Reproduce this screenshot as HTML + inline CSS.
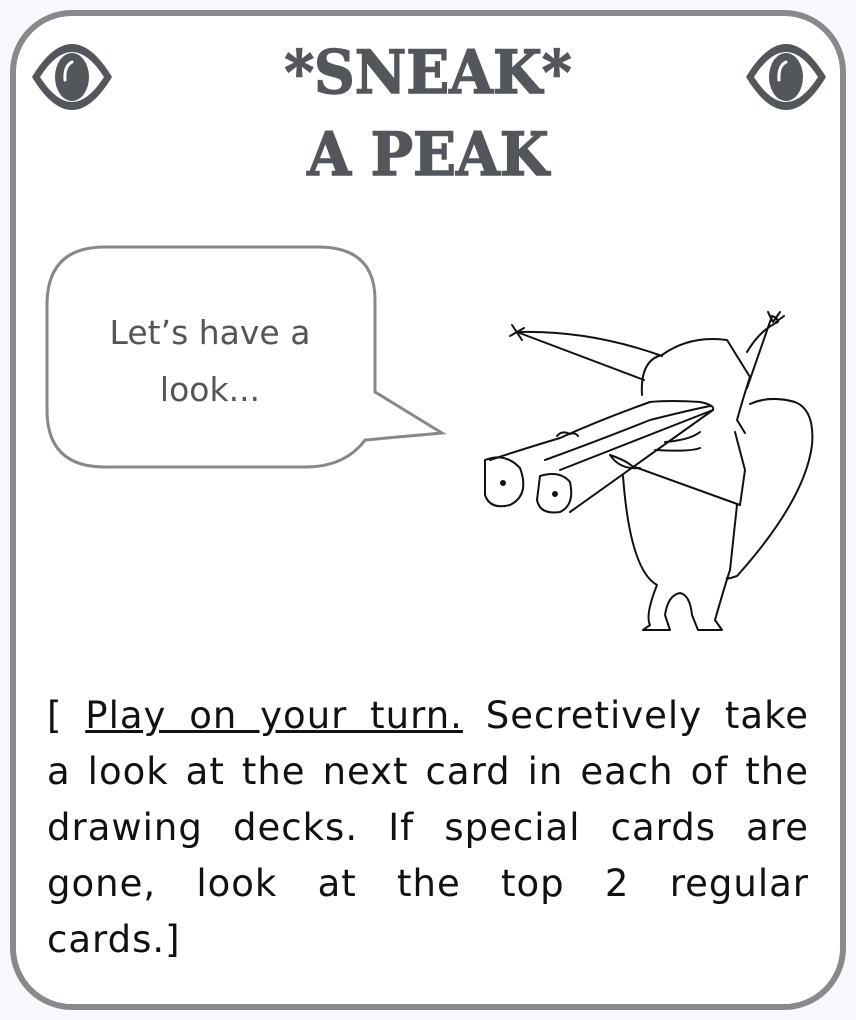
<!DOCTYPE html>
<html><head><meta charset="utf-8"><style>
html,body{margin:0;padding:0;background:#f8f8fc;}
body{width:856px;height:1020px;position:relative;overflow:hidden;font-family:"DejaVu Sans",sans-serif;}
.card{position:absolute;left:10px;top:10px;width:824px;height:988px;border:6px solid #87898c;border-radius:62px;background:#fff;}
.title{position:absolute;left:0;width:856px;text-align:center;font-family:"DejaVu Serif",serif;font-weight:bold;color:#53575c;font-size:60px;line-height:70px;transform:scaleX(0.94);transform-origin:428px 0;-webkit-text-stroke:1.5px #53575c;}
.body{position:absolute;left:47px;top:688px;width:762px;font-size:37px;letter-spacing:1px;line-height:56px;color:#111;}
.body div{text-align:justify;text-align-last:justify;}
.body div.l{text-align-last:left;}
.bt{position:absolute;width:300px;text-align:center;font-size:33px;color:#555;line-height:57px;left:60px;top:304px;}
</style></head><body>
<div class="card"></div>
<svg width="856" height="1020" style="position:absolute;left:0;top:0">
<g fill="#53575c">
<path d="M32 77 Q52 44 72 44 Q92 44 112 77 Q92 110 72 110 Q52 110 32 77Z M40 77 Q56 102 72 102 Q88 102 104 77 Q88 52 72 52 Q56 52 40 77Z"/>
<ellipse cx="72" cy="77" rx="17" ry="24"/>
<path d="M746 77 Q766 44 786 44 Q806 44 826 77 Q806 110 786 110 Q766 110 746 77Z M754 77 Q770 102 786 102 Q802 102 818 77 Q802 52 786 52 Q770 52 754 77Z"/>
<ellipse cx="786" cy="77" rx="17" ry="24"/>
</g>
<g fill="none" stroke="#fff" stroke-width="3" stroke-linecap="round">
<path d="M65 80 Q64 66 72 62"/><path d="M779 80 Q778 66 786 62"/>
</g>
<path d="M105 247 L318 247 Q375 247 375 300 L375 392 L442 433 L365 440 Q345 467 305 467 L105 467 Q47 467 47 410 L47 305 Q47 247 105 247Z" fill="#fff" stroke="#888" stroke-width="3"/>
<g fill="none" stroke="#111" stroke-width="2" stroke-linecap="round" stroke-linejoin="round">
<path d="M517 332 Q590 330 662 356"/>
<path d="M517 332 L644 380"/>
<path d="M512 325 L522 340 M510 336 L524 328"/>
<path d="M642 395 Q640 360 662 355 Q690 335 727 340 L750 377 Q744 395 737 420 L745 433"/>
<path d="M747 388 L772 316 Q778 318 778 322 Q760 330 747 352"/>
<path d="M768 312 L773 322 L780 312 M776 322 L784 316"/>
<path d="M750 404 Q770 395 795 402 Q815 410 812 445 Q805 500 737 576 Q725 580 727 578"/>
<path d="M490 460 Q520 450 560 438 Q600 420 650 402 Q670 400 700 402 Q715 405 713 410 L560 470"/>
<path d="M545 460 Q600 440 650 420 Q690 410 710 406"/>
<path d="M570 512 L713 410"/>
<path d="M557 436 Q562 430 570 434 Q575 432 578 436"/>
<path d="M485 460 Q505 452 520 468 Q530 495 510 505 Q490 510 485 495 Z"/>
<path d="M540 476 Q560 470 570 482 Q575 505 560 512 Q540 515 537 500 Z"/>
<circle cx="503" cy="483" r="2" fill="#111"/><circle cx="555" cy="494" r="2" fill="#111"/>
<path d="M610 455 Q625 460 632 466 L740 505 L745 470 L735 432"/>
<path d="M610 455 Q620 470 640 468"/>
<path d="M665 442 Q690 440 700 432"/>
<path d="M655 450 Q690 452 700 448"/>
<path d="M623 476 Q630 570 657 585 Q645 615 650 625 L643 630 L670 630 L665 615 Q668 595 680 593 Q690 595 692 615 L698 630 L722 630 L715 620 Q725 585 730 570 L737 505"/>
</g>
</svg>
<div class="title" style="top:38px">*SNEAK*</div>
<div class="title" style="top:120px">A PEAK</div>
<div class="bt">Let’s have a<br>look...</div>
<div class="body">
<div>[ <u>Play on your turn.</u> Secretively take</div>
<div>a look at the next card in each of the</div>
<div>drawing decks. If special cards are</div>
<div>gone, look at the top 2 regular</div>
<div class="l">cards.]</div>
</div>
</body></html>
